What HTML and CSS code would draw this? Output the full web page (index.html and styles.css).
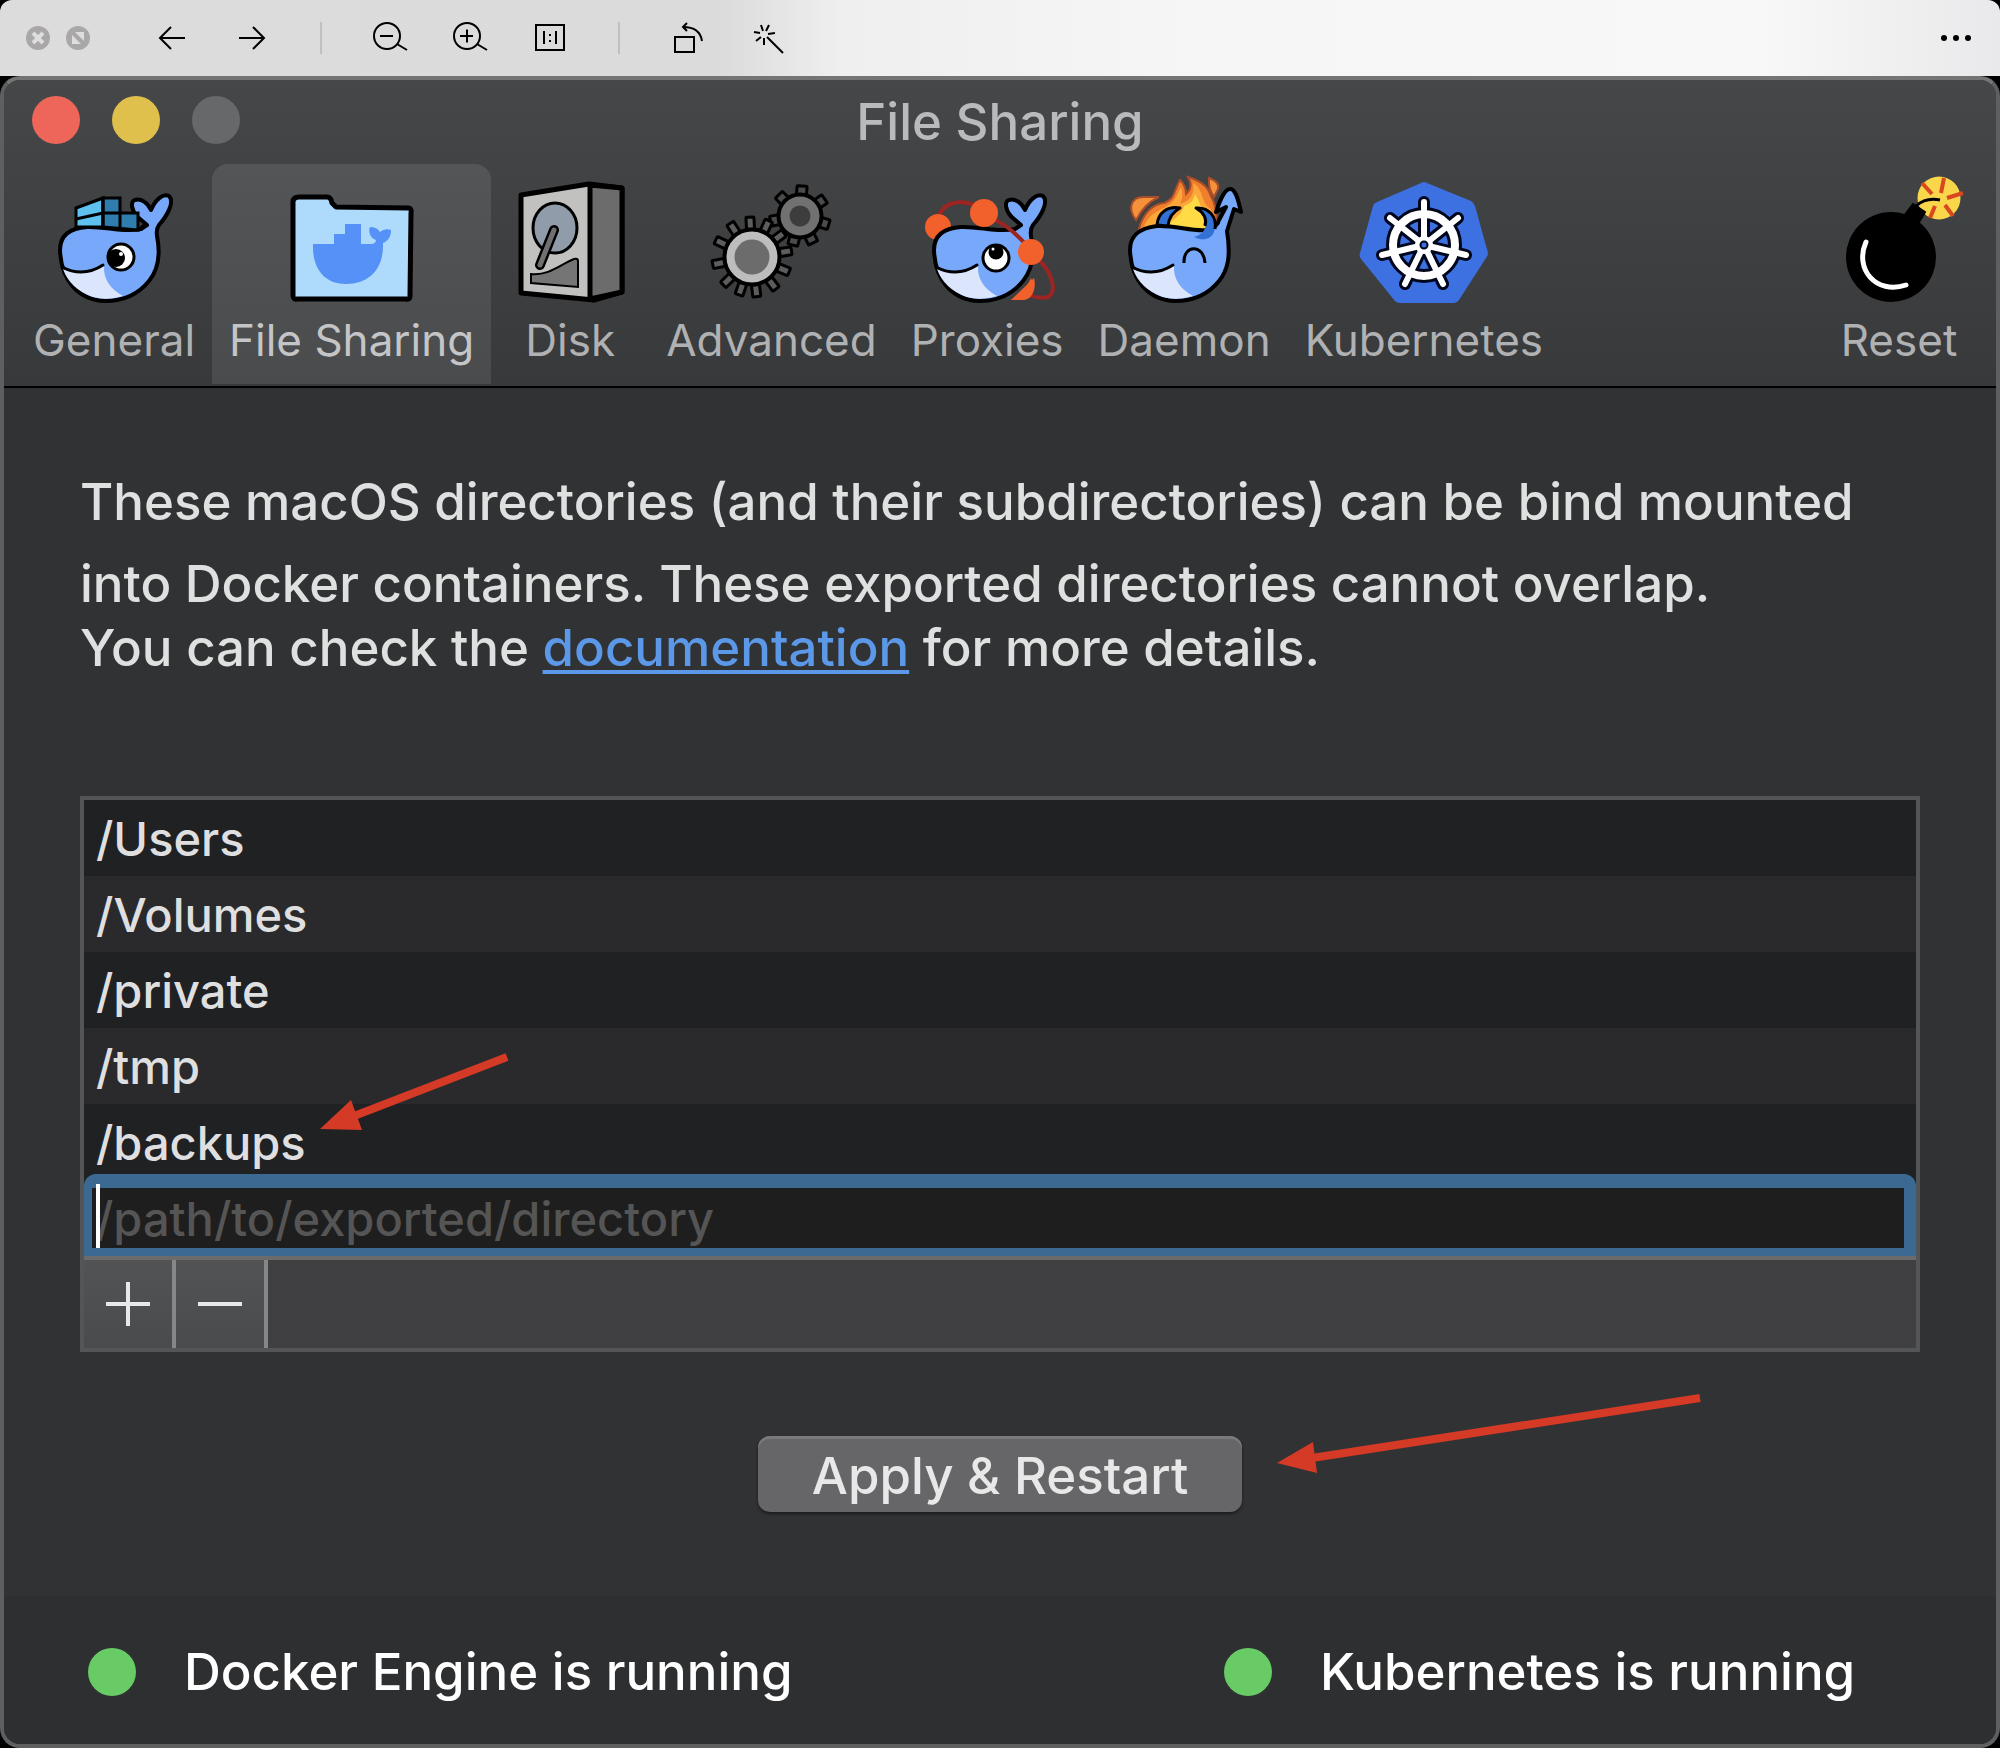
FILE: index.html
```html
<!DOCTYPE html>
<html lang="en">
<head>
<meta charset="utf-8">
<title>File Sharing</title>
<link rel="stylesheet" href="styles.css">
</head>
<body>
<svg class="sprites" aria-hidden="true">
  <defs>
    <g id="whale-face">
      <path d="M62 269Q82 278 103 266Q102 285 122 296Q105 301 92 297Q69 289 62 269Z" fill="#dbe6fd"/>
      <path d="M61 267Q82 278 102 265" fill="none" stroke="#000" stroke-width="3" stroke-linecap="round"/>
    </g>
    <path id="whale-body" d="M59 250C59 234 70 228 86 227C104 226 122 233 140 229L146 225L139 219C130 212 129 201 134 200C140 198 147 203 150 210C154 200 162 193 168 196C174 202 166 216 158 225Q155 229 156 236C160 256 157 270 148 281C136 296 120 301 104 301C77 300 60 280 59 250Z" fill="#78a8fa" stroke="#000" stroke-width="4" stroke-linejoin="round"/>
    <rect id="tooth-big" x="748" y="217" width="8" height="12" rx="1" fill="#5d5d5d" stroke="#000" stroke-width="3"/>
    <rect id="tooth-small" x="795" y="186" width="10" height="10" rx="1" fill="#4b4b4b" stroke="#000" stroke-width="3"/>
    <path id="spokes" d="M0 0V-43M0 0L34 -27M0 0L42 10M0 0L19 39M0 0L-19 39M0 0L-42 10M0 0L-34 -27"/>
  </defs>
</svg>

<nav class="viewer" aria-label="Image viewer">
  <div class="viewer-lights">
    <button class="viewer-light" aria-label="Close"><svg viewBox="26 26 24 24"><circle cx="38" cy="38" r="12" fill="#a9a7a8"/><path d="M33 33L43 43M43 33L33 43" stroke="#dededf" stroke-width="4"/></svg></button>
    <button class="viewer-light" aria-label="Resize"><svg viewBox="66 26 24 24"><circle cx="78" cy="38" r="12" fill="#a9a7a8"/><path d="M75 32H84V41ZM72 35V44H81Z" fill="#dededf"/></svg></button>
  </div>
  <button class="viewer-btn" aria-label="Previous"><svg viewBox="132 0 80 76"><path d="M185 38H160M171 27L160 38L171 49"/></svg></button>
  <button class="viewer-btn" aria-label="Next"><svg viewBox="212 0 80 76"><path d="M239 38H264M253 27L264 38L253 49"/></svg></button>
  <span class="viewer-sep"></span>
  <button class="viewer-btn" aria-label="Zoom out"><svg viewBox="350 0 80 76"><circle cx="387" cy="36" r="13"/><path d="M380 36H393M397 44L407 50"/></svg></button>
  <button class="viewer-btn" aria-label="Zoom in"><svg viewBox="430 0 80 76"><circle cx="467" cy="36" r="13"/><path d="M460 36H473M467 29.500V42.500M477 44L487 50"/></svg></button>
  <button class="viewer-btn" aria-label="Actual size"><svg viewBox="510 0 80 76"><path d="M536 25H564V50H536ZM544 31V44M556 31V44M550 34V36M550 40V42"/></svg></button>
  <span class="viewer-sep"></span>
  <button class="viewer-btn" aria-label="Rotate"><svg viewBox="648 0 80 76"><path d="M675 37H694V52H675ZM702 41Q700 27 683 27M687 23L683 27L687 31"/></svg></button>
  <button class="viewer-btn" aria-label="Enhance"><svg viewBox="728 0 80 76"><path d="M767 37L783 53M761 25L763 31M769 25L766 31M754 32L760 33M775 33L768 34M756 41L761 37M764 38V45"/></svg></button>
  <button class="viewer-btn viewer-more" aria-label="More"><svg viewBox="1916 0 80 76"><g fill="#000" stroke="none"><circle cx="1944" cy="38" r="3"/><circle cx="1956" cy="38" r="3"/><circle cx="1968" cy="38" r="3"/></g></svg></button>
</nav>

<div class="window">
  <header class="header">
    <div class="titlebar">
      <div class="lights">
        <button class="light light-close" aria-label="Close window"></button>
        <button class="light light-min" aria-label="Minimize window"></button>
        <button class="light light-off" aria-label="Zoom window" disabled></button>
      </div>
      <h1 class="title">File Sharing</h1>
    </div>
    <div class="tabs">
      <button class="tab"><svg class="tab-icon" viewBox="49 176 128 128">
        <use href="#whale-body"/>
        <path d="M75 208L102 198V227L75 227Z" fill="#5ec1f0" stroke="#000" stroke-width="3"/>
        <path d="M102 198H119V213H137V230L102 227Z" fill="#2f7cae" stroke="#000" stroke-width="3"/>
        <path d="M75 219L102 213H119M102 198V227M119 213V229" fill="none" stroke="#000" stroke-width="3"/>
        <path d="M136 229L143 223L146 226L140 231Z"/>
        <use href="#whale-face"/>
        <circle cx="120" cy="257" r="13" fill="#fff" stroke="#000" stroke-width="3"/><circle cx="115" cy="258" r="9"/><circle cx="120" cy="254" r="2" fill="#fff"/>
      </svg><span class="tab-label">General</span></button>

      <button class="tab tab-active" aria-current="page"><svg class="tab-icon" viewBox="288 176 128 128">
        <path d="M293 202Q293 197 299 197H327Q331 197 332 203L336 207L408 208Q412 208 411 213L410 296Q410 300 406 299L297 299Q293 300 293 295Z" fill="#aedbfb" stroke="#000" stroke-width="5" stroke-linejoin="round"/>
        <path d="M313 244H334V234H345V224H361V244H372Q376 243 376 240C370 238 368 231 370 227Q377 227 380 232Q384 228 391 230C391 237 388 241 383 243C384 268 370 284 346 284C324 284 312 268 313 244Z" fill="#5591f6"/>
      </svg><span class="tab-label">File Sharing</span></button>

      <button class="tab"><svg class="tab-icon" viewBox="507 176 128 128">
        <path d="M522 195L590 184L623 188V292L595 300L522 293Z" fill="#c1c1c0" stroke="#000" stroke-width="5" stroke-linejoin="round"/>
        <path d="M591 185L623 188V292L591 299Z" fill="#6c6c6c" stroke="#000" stroke-width="5" stroke-linejoin="round"/>
        <ellipse cx="556" cy="228" rx="22" ry="25" fill="#919caa" stroke="#000" stroke-width="3"/>
        <path d="M555 230L541 265" stroke="#000" stroke-width="10" stroke-linecap="round"/>
        <path d="M555 230L541 265" stroke="#707070" stroke-width="5" stroke-linecap="round"/>
        <path d="M532 274C550 276 562 264 575 259Q579 258 579 261V287L532 283Z" fill="#757575" stroke="#000" stroke-width="2"/>
      </svg><span class="tab-label">Disk</span></button>

      <button class="tab"><svg class="tab-icon" viewBox="707 176 128 128">
        <use href="#tooth-small" transform="rotate(4 800 216)"/><use href="#tooth-small" transform="rotate(55 800 216)"/><use href="#tooth-small" transform="rotate(107 800 216)"/><use href="#tooth-small" transform="rotate(154 800 216)"/><use href="#tooth-small" transform="rotate(194 800 216)"/><use href="#tooth-small" transform="rotate(260 800 216)"/><use href="#tooth-small" transform="rotate(315 800 216)"/>
        <circle cx="800" cy="216" r="21.500" fill="#717171" stroke="#000" stroke-width="4"/><circle cx="800" cy="216" r="10.500" fill="#3d3d3d"/>
        <use href="#tooth-big" transform="rotate(-3 752 257)"/><use href="#tooth-big" transform="rotate(25 752 257)"/><use href="#tooth-big" transform="rotate(53 752 257)"/><use href="#tooth-big" transform="rotate(81 752 257)"/><use href="#tooth-big" transform="rotate(112 752 257)"/><use href="#tooth-big" transform="rotate(143 752 257)"/><use href="#tooth-big" transform="rotate(173 752 257)"/><use href="#tooth-big" transform="rotate(199 752 257)"/><use href="#tooth-big" transform="rotate(226 752 257)"/><use href="#tooth-big" transform="rotate(259 752 257)"/><use href="#tooth-big" transform="rotate(295 752 257)"/><use href="#tooth-big" transform="rotate(327 752 257)"/>
        <circle cx="752" cy="257" r="27.500" fill="#bdbdbd" stroke="#000" stroke-width="4"/><circle cx="752" cy="257" r="17.500" fill="#6c6c6c"/>
      </svg><span class="tab-label">Advanced</span></button>

      <button class="tab"><svg class="tab-icon" viewBox="920 176 128 128">
        <g fill="none" stroke="#9c2422" stroke-width="4"><path d="M934 220C940 200 958 199 977 207M1036 260C1050 274 1054 292 1045 297Q1036 299 1026 295"/></g>
        <circle cx="935" cy="227" r="13" fill="#f2602c"/><path d="M1031 278C1034 290 1028 300 1020 300H1008Z" fill="#f2602c"/>
        <use href="#whale-body" x="872"/>
        <use href="#whale-face" x="872"/>
        <path d="M990 219Q1008 227 1024 246" fill="none" stroke="#9c2422" stroke-width="4"/>
        <circle cx="981" cy="213" r="14" fill="#f2602c"/><circle cx="1028" cy="252" r="13" fill="#f2602c"/>
        <path d="M1028 278Q1034 290 1026 298Q1022 300 1008 300Q1022 292 1028 278Z" fill="#f2602c"/>
        <circle cx="993" cy="258" r="13" fill="#fff" stroke="#000" stroke-width="3"/><circle cx="993" cy="252" r="7.500"/><circle cx="990" cy="249" r="1.500" fill="#fff"/>
      </svg><span class="tab-label">Proxies</span></button>

      <button class="tab"><svg class="tab-icon" viewBox="1118 176 128 128">
        <path d="M1134 220C1124 207 1131 197 1141 197L1157 197Q1143 203 1134 220Z" fill="#f4913a" stroke="#a94e2a" stroke-width="2"/>
        <path d="M1207 178Q1218 182 1216 189L1212 197Q1206 189 1207 178Z" fill="#f4913a" stroke="#a94e2a" stroke-width="2"/>
        <path d="M1137 229C1141 213 1151 204 1162 203C1174 199 1172 189 1178 180Q1184 186 1184 194Q1192 187 1186 177C1199 181 1206 187 1208 194C1213 203 1216 212 1214 231H1137Z" fill="#ef7f2c" stroke="#a94e2a" stroke-width="2"/>
        <path d="M1141 229C1147 212 1158 211 1165 206C1174 201 1175 194 1179 187Q1182 196 1178 204Q1194 199 1191 183C1203 190 1198 203 1209 209L1210 230Z" fill="#fba73a"/>
        <path d="M1165 229C1166 220 1179 218 1182 206Q1192 203 1193 194C1198 202 1199 209 1204 215L1205 230Z" fill="#ffdb45"/>
        <path d="M1128 250C1128 234 1139 228 1155 226C1174 225 1190 232 1206 230Q1216 226 1217 220L1224 207L1214 212C1217 203 1222 188 1229 189C1234 190 1237 203 1239 212L1232 209L1225 231C1229 256 1226 270 1217 281C1205 296 1189 301 1173 301C1146 300 1129 280 1128 250Z" fill="#78a8fa" stroke="#000" stroke-width="4" stroke-linejoin="round"/>
        <use href="#whale-face" x="1069"/>
        <path d="M1155 225C1156 212 1166 206 1178 208Q1167 214 1166 226Z" fill="#3471d5" stroke="#000" stroke-width="3" stroke-linejoin="round"/>
        <path d="M1194 208C1209 209 1216 220 1212 232C1209 240 1200 241 1192 237Q1205 233 1204 221Q1202 213 1194 208Z" fill="#3471d5"/>
        <path d="M1203 226Q1206 215 1194 208C1207 207 1215 217 1213 229" fill="none" stroke="#000" stroke-width="3" stroke-linejoin="round"/>
        <path d="M1182 263C1181 244 1202 244 1203 263" fill="none" stroke="#000" stroke-width="3"/>
      </svg><span class="tab-label">Daemon</span></button>

      <button class="tab"><svg class="tab-icon" viewBox="1360 176 128 128">
        <path d="M1421 183Q1424 181 1427 183L1471 201Q1474 203 1475 206L1488 253Q1488 256 1486 258L1459 300Q1457 303 1454 303H1400Q1397 303 1395 301L1361 259Q1359 256 1360 253L1373 206Q1374 203 1377 202Z" fill="#3d70e0"/>
        <g transform="translate(1424 245)" fill="none" stroke-linecap="round">
          <circle r="31" stroke="#00061c" stroke-width="14"/><use href="#spokes" stroke="#00061c" stroke-width="12"/>
          <circle r="10" fill="#00061c"/>
          <circle r="31" stroke="#fff" stroke-width="8"/><use href="#spokes" stroke="#fff" stroke-width="6"/>
          <circle r="9" fill="#fff"/><circle r="3.500" fill="#3d70e0" stroke="#00061c" stroke-width="2"/>
        </g>
      </svg><span class="tab-label">Kubernetes</span></button>

      <button class="tab tab-last"><svg class="tab-icon" viewBox="1835 176 128 128">
        <circle cx="1939" cy="198" r="21.500" fill="#fad64a"/>
        <path d="M1922 183L1932 194M1944 178L1941 193M1963 193L1947 198M1945 205L1953 216M1935 206L1930 218" stroke="#d9481f" stroke-width="4"/>
        <path d="M1916 206Q1926 197 1940 200" fill="none" stroke="#000" stroke-width="3"/>
        <circle cx="1891" cy="257" r="45"/><path d="M1913 204L1925 212L1918 224L1904 216Z" stroke="#000" stroke-width="2"/>
        <path d="M1866 242C1854 269 1876 295 1906 285" fill="none" stroke="#fff" stroke-width="5" stroke-linecap="round"/>
      </svg><span class="tab-label">Reset</span></button>
    </div>
  </header>

  <main class="content">
    <p class="intro">
      <span class="intro-line intro-first">These macOS directories (and their subdirectories) can be bind mounted</span>
      <span class="intro-line">into Docker containers. These exported directories cannot overlap.</span>
      <span class="intro-line">You can check the <a class="link" href="#documentation">documentation</a> for more details.</span>
    </p>

    <section class="shares" aria-label="Shared directories">
      <ul class="rows">
        <li class="row">/Users</li>
        <li class="row">/Volumes</li>
        <li class="row">/private</li>
        <li class="row">/tmp</li>
        <li class="row">/backups</li>
      </ul>
      <div class="field">
        <input class="path-input" type="text" aria-label="Directory path" placeholder="/path/to/exported/directory">
        <span class="caret"></span>
      </div>
      <div class="tools">
        <button class="tool" aria-label="Add directory"><svg viewBox="0 0 88 88"><path d="M22 44H66M44 22V66"/></svg></button>
        <button class="tool" aria-label="Remove directory"><svg viewBox="0 0 88 88"><path d="M22 44H66"/></svg></button>
      </div>
      <svg class="arrow arrow-row" viewBox="320 1050 190 84"><path d="M354 1116L507 1057" stroke="#d53a26" stroke-width="8"/><path d="M320 1129L351 1100L362 1130Z" fill="#d53a26"/></svg>
    </section>

    <div class="actions">
      <button class="apply">Apply &amp; Restart</button>
      <svg class="arrow arrow-apply" viewBox="1277 1390 424 84"><path d="M1312 1458L1700 1398" stroke="#d53a26" stroke-width="8"/><path d="M1277 1463L1313 1442L1317 1473Z" fill="#d53a26"/></svg>
    </div>
  </main>

  <footer class="status">
    <div class="status-item"><span class="dot"></span>Docker Engine is running</div>
    <div class="status-item"><span class="dot"></span>Kubernetes is running</div>
  </footer>
</div>
</body>
</html>
```

FILE: styles.css
```css
* { box-sizing: border-box; }

body {
  margin: 0;
  min-height: 100vh;
  display: flex;
  flex-direction: column;
  background: #000;
  font-family: Inter, "Liberation Sans", sans-serif;
}

button {
  margin: 0;
  padding: 0;
  border: 0;
  background: none;
  color: inherit;
  font: inherit;
}

svg { display: block; }

.sprites { position: absolute; width: 0; height: 0; }

/* Image viewer bar */
.viewer {
  display: flex;
  align-items: center;
  height: 76px;
  padding: 0 4px 0 26px;
  border-radius: 12px 12px 0 0;
  background: linear-gradient(90deg, #dcdcdd 0, #dbdbdc 36%, #efefef 42%, #f6f6f6 60%, #f8f8f8 88%, #e9e9eb 100%);
}

.viewer-lights { display: flex; gap: 16px; margin-right: 42px; }
.viewer-light { width: 24px; height: 24px; }
.viewer-btn { width: 80px; height: 76px; }
.viewer-btn svg { fill: none; stroke: #000; stroke-width: 2; }
.viewer-sep { width: 2px; height: 32px; margin: 0 28px; background: #c0c0c1; }
.viewer-more { margin-left: auto; }

/* Preferences window */
.window {
  flex: 1;
  display: flex;
  flex-direction: column;
  border: 4px solid #5e5f60;
  border-top-color: #737575;
  border-radius: 20px;
  background: #313234;
  overflow: hidden;
}

.header {
  padding-bottom: 2px;
  border-bottom: 2px solid #000;
  background: linear-gradient(#464748, #38393b);
}

.titlebar {
  display: grid;
  grid-template-columns: 1fr auto 1fr;
  align-items: center;
  height: 84px;
  padding: 0 28px;
}

.lights { display: flex; gap: 32px; margin-bottom: 4px; }
.light { width: 48px; height: 48px; border-radius: 50%; }
.light-close { background: #ed6659; }
.light-min { background: #dfc04d; }
.light-off { background: #676869; }

.title {
  margin: 0;
  color: #b9babb;
  font-size: 51px;
  font-weight: 450;
  line-height: 84px;
}

.tabs { display: flex; padding: 0 18px 0 12px; }

.tab {
  display: flex;
  flex-direction: column;
  align-items: center;
  gap: 10px;
  min-width: 158px;
  padding: 12px 17px 18px;
  color: #b0b1b2;
  font-size: 44px;
  line-height: 52px;
}

.tab-active {
  border-radius: 16px 16px 0 0;
  background: linear-gradient(#545556, #4a4b4d);
  color: #c4c5c6;
}

.tab-last { margin-left: auto; }
.tab-icon { flex: none; width: 128px; height: 128px; margin: 0 -4px; overflow: visible; }

.content { flex: 1; padding: 82px 76px 84px; }

.intro { margin: 0; color: #dfe0e0; font-size: 51px; font-weight: 450; line-height: 64px; }
.intro-line { display: block; white-space: nowrap; }
.intro-first { margin-bottom: 18px; }
.link { color: #5c98e8; text-decoration-thickness: 4px; text-underline-offset: 4px; }

/* Directory list */
.shares {
  position: relative;
  margin-top: 116px;
  border: 4px solid #545556;
  background: #202123;
  font-size: 47px;
  font-weight: 450;
}

.rows { margin: 0; padding: 0; list-style: none; }
.row { height: 76px; padding: 1px 0 0 12px; color: #dfdfe0; line-height: 76px; }
.row:nth-child(even) { background: #2a2a2c; }

.field { position: relative; margin-top: -6px; }

.path-input {
  display: block;
  width: 100%;
  height: 82px;
  padding: 0 4px;
  border: solid #3b6992;
  border-width: 14px 12px 8px 8px;
  border-radius: 12px 12px 0 0;
  outline: 0;
  background: #1e1e1e;
  color: #dfdfe0;
  font: inherit;
}

.path-input::placeholder { color: #555; opacity: 1; }

.caret {
  position: absolute;
  top: 10px;
  left: 12px;
  width: 4px;
  height: 64px;
  background: #fff;
}

.tools { display: flex; border-top: 4px solid #6b6b6c; background: #404042; }
.tool { width: 92px; height: 88px; border-right: 4px solid #868788; background: linear-gradient(#525355, #4a4b4d); }
.tool svg { width: 88px; height: 88px; stroke: #e8e8e8; stroke-width: 4; }

.arrow { position: absolute; }
.arrow-row { left: 236px; top: 250px; width: 190px; height: 84px; }
.arrow-apply { left: calc(50% + 277px); top: -46px; width: 424px; height: 84px; }

.actions { position: relative; display: flex; justify-content: center; margin-top: 84px; }

.apply {
  width: 484px;
  height: 76px;
  padding-top: 2px;
  border-radius: 12px;
  background: #666668;
  box-shadow: inset 0 3px #7a7a7c, 0 2px 3px #1c1c1d;
  color: #e8e8e9;
  font-size: 51px;
  font-weight: 500;
}

.status {
  display: grid;
  grid-template-columns: 1136px auto;
  padding: 46px 84px 42px;
  background: #2e2f31;
  color: #fff;
  font-size: 51px;
  font-weight: 450;
  line-height: 60px;
}

.status-item { display: flex; align-items: center; gap: 48px; white-space: nowrap; }
.dot { width: 48px; height: 48px; border-radius: 50%; background: #68cb65; }
```
